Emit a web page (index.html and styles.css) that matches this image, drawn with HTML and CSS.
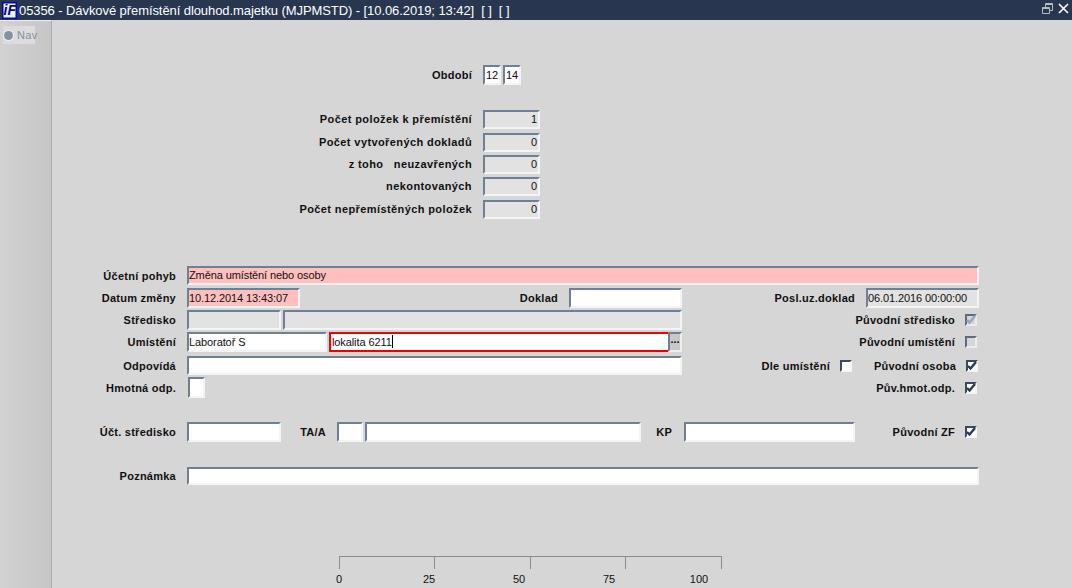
FILE: index.html
```html
<!DOCTYPE html>
<html lang="cs">
<head>
<meta charset="utf-8">
<title>Dávkové přemístění</title>
<link rel="stylesheet" href="styles.css">
</head>
<body>
<div class="window">
  <header class="titlebar">
    <svg class="logo" width="15" height="17" viewBox="0 0 15 17"><rect x="0.750" y="0.750" width="13.500" height="15.500" fill="#eef2fa" stroke="#0000e0" stroke-width="1.500"/><text x="1.500" y="13" class="logo-text">iF</text></svg>
    <span class="title">05356 - Dávkové přemístění dlouhod.majetku (MJPMSTD) - [10.06.2019; 13:42]&nbsp;&nbsp;[ ]&nbsp;&nbsp;[ ]</span>
    <svg class="winbtn" width="27" height="14" viewBox="0 0 27 14"><path d="M3.500 5.500V0.500H10.500V7.500H7.500M3.500 1.500H10.500" fill="none" stroke="#b8bcc4"/><path d="M0.500 4.500H7.500V10.500H0.500ZM0.500 5.500H7.500" fill="none" stroke="#b8bcc4"/><path d="M17 1 26 10M26 1 17 10" stroke="#fff" stroke-width="1.600"/></svg>
  </header>
  <div class="content">
    <aside class="side">
      <div class="nav"><span class="radio"></span><span>Nav</span></div>
    </aside>
    <main class="canvas">
      <section class="stats">
        <div class="row r-period"><label class="lbl l-stat">Období</label><span class="f w18 gap11">12</span><span class="f w18 gap2">14</span></div>
        <div class="row r-s1"><label class="lbl l-stat">Počet položek k přemístění</label><span class="f ro num w57 gap11">1</span></div>
        <div class="row r-s4"><label class="lbl l-stat">Počet vytvořených dokladů</label><span class="f ro num w57 gap11">0</span></div>
        <div class="row r-s3"><label class="lbl l-stat">z toho&nbsp;&nbsp;&nbsp;neuzavřených</label><span class="f ro num w57 gap11">0</span></div>
        <div class="row r-s3"><label class="lbl l-stat">nekontovaných</label><span class="f ro num w57 gap11">0</span></div>
        <div class="row r-s4"><label class="lbl l-stat">Počet nepřemístěných položek</label><span class="f ro num w57 gap11">0</span></div>
      </section>
      <section class="detail">
        <div class="row r19"><label class="lbl l-main">Účetní pohyb</label><span class="f pink w792 gap11">Změna umístění nebo osoby</span></div>
        <div class="row r-first"><label class="lbl l-main">Datum změny</label><span class="f pink w113 gap11">10.12.2014 13:43:07</span><label class="lbl l-doklad">Doklad</label><span class="f w113 gap11"></span><label class="lbl l-posl">Posl.uz.doklad</label><span class="f ro w113 gap11">06.01.2016 00:00:00</span></div>
        <div class="row r-d"><label class="lbl l-main">Středisko</label><span class="f ro w94 gap11"></span><span class="f ro w399 gap2"></span><label class="lbl l-chk1">Původní středisko</label><span class="chk dis"><svg width="12" height="12" viewBox="0 0 12 12"><path d="M2 6 4.500 8.500 10 2" class="tick-dis"/></svg></span></div>
        <div class="row r-d"><label class="lbl l-main">Umístění</label><span class="f w140 gap11">Laboratoř S</span><span class="f red w340 gap2">lokalita 6211<i class="caret"></i></span><button class="more">...</button><label class="lbl l-chk1">Původní umístění</label><span class="chk dis"></span></div>
        <div class="row r19 r-d1"><label class="lbl l-main">Odpovídá</label><span class="f w495 gap11"></span><label class="lbl l-dle">Dle umístění</label><span class="chk"></span><label class="lbl l-chk2">Původní osoba</label><span class="chk"><svg width="12" height="12" viewBox="0 0 12 12"><path d="M2 6 4.500 8.500 10 2" class="tick"/></svg></span></div>
        <div class="row r21 r-d"><label class="lbl l-main">Hmotná odp.</label><span class="f w17 gap12"></span><label class="lbl l-hmot">Pův.hmot.odp.</label><span class="chk"><svg width="12" height="12" viewBox="0 0 12 12"><path d="M2 6 4.500 8.500 10 2" class="tick"/></svg></span></div>
        <div class="row r-acc"><label class="lbl l-main">Účt. středisko</label><span class="f w94 gap11"></span><label class="lbl l-ta">TA/A</label><span class="f w26 gap11"></span><span class="f w276 gap2"></span><label class="lbl l-kp">KP</label><span class="f w171 gap12"></span><label class="lbl l-zf">Původní ZF</label><span class="chk"><svg width="12" height="12" viewBox="0 0 12 12"><path d="M2 6 4.500 8.500 10 2" class="tick"/></svg></span></div>
        <div class="row r18 r-note"><label class="lbl l-main">Poznámka</label><span class="f w792 gap11">&nbsp;</span></div>
      </section>
      <section class="scale">
        <div class="ticks"><i></i><i></i><i></i><i></i></div>
        <div class="scale-labels"><span>0</span><span>25</span><span>50</span><span>75</span><span>100</span></div>
      </section>
    </main>
  </div>
</div>
</body>
</html>
```
FILE: styles.css
```css
* { box-sizing: border-box; }
html, body { margin: 0; height: 100%; overflow: hidden; }
body { font-family: "Liberation Sans", Arial, sans-serif; font-size: 11px; color: #101010; background: #d6d6d6; }
.window { width: 1072px; height: 588px; display: flex; flex-direction: column; }
.titlebar { height: 20px; flex: none; background: #28374f; display: flex; align-items: center; padding: 0 3px 0 2px; color: #fff; }
.logo { flex: none; }
.logo-text { font: italic 700 14px "Liberation Sans", sans-serif; fill: #0a0a70; }
.title { flex: 1; margin-left: 2px; font-size: 13px; letter-spacing: -0.08px; white-space: nowrap; }
.winbtn { flex: none; }
.content { flex: 1; display: flex; min-height: 0; }
.side { width: 52px; flex: none; background: linear-gradient(90deg, #d2d2d2, #c6c6c6); border-right: 1px solid #a7adb6; border-top: 1px solid #f0f0f0; padding: 5px 0 0 3px; }
.nav { width: 32px; height: 18px; background: #dcdcdc; display: flex; align-items: center; gap: 4px; color: #8391a4; font-size: 11px; letter-spacing: 0.3px; }
.radio { flex: none; width: 9px; height: 9px; margin-left: 1px; border-radius: 50%; background: #8391a4; box-shadow: 0 0 0 1px #f0f0f0; }
.canvas { flex: 1; min-width: 0; display: flex; flex-direction: column; }
.row { display: flex; align-items: center; height: 20px; flex: none; }
.r18 { height: 18px; }
.r19 { height: 19px; }
.r21 { height: 21px; }
.lbl { font-weight: 700; text-align: right; white-space: nowrap; letter-spacing: 0.25px; flex: none; }
.f { flex: none; height: 100%; padding: 0; line-height: 16px; background: #fff; border: 2px solid; border-color: #6f7f95 #f4f4f4 #f4f4f4 #6f7f95; white-space: nowrap; overflow: hidden; font-size: 11px; letter-spacing: -0.1px; }
.r19 .f { line-height: 15px; }
.r18 .f { line-height: 14px; }
.ro { background: #e2e2e2; }
.pink { background: #ffbfbf; }
.red { border: 2px solid #f00000; border-right: 0; padding-left: 1px; }
.num { text-align: right; padding-right: 1px; }
.caret { display: inline-block; width: 1px; height: 13px; background: #000; vertical-align: -2px; }
.stats { padding-top: 45px; }
.stats .row:not(.r-period) { height: 19px; }
.stats .row:not(.r-period) .f { line-height: 14px; }
.stats .row:not(.r-period) .lbl { padding-bottom: 2px; letter-spacing: 0.4px; }
.r-period .f { text-align: center; color: #200020; }
.r-s1 { margin-top: 25px; }
.r-s3 { margin-top: 3px; }
.r-s4 { margin-top: 4px; }
.l-stat { width: 420px; }
.gap11 { margin-left: 11px; }
.gap12 { margin-left: 12px; }
.gap2 { margin-left: 2px; }
.w17 { width: 17px; }
.w18 { width: 18px; }
.w26 { width: 26px; }
.w57 { width: 57px; }
.w94 { width: 94px; }
.w113 { width: 113px; }
.w140 { width: 140px; }
.w171 { width: 171px; }
.w276 { width: 276px; }
.w340 { width: 340px; }
.w399 { width: 399px; }
.w495 { width: 495px; }
.w792 { width: 792px; }
.detail { margin-top: 47px; }
.r-first { margin-top: 3px; }
.r-d { margin-top: 2px; }
.r-d1 { margin-top: 4px; }
.l-main { width: 124px; }
.l-doklad { width: 258px; }
.l-posl { width: 173px; }
.l-chk1 { width: 273px; }
.l-dle { width: 148px; }
.l-chk2 { width: 104px; }
.l-hmot { width: 750px; }
.l-ta { width: 45px; }
.l-kp { width: 31px; }
.l-zf { width: 100px; }
.chk { flex: none; width: 12px; height: 12px; margin-left: 10px; background: #fff; border: 2px solid; border-color: #3c4a60 #f6f6f6 #f6f6f6 #3c4a60; display: block; }
.chk svg { display: block; margin: -2px; }
.chk.dis { background: #d6d6d6; border-color: #5f6b7b #ececec #ececec #5f6b7b; }
.tick { fill: none; stroke: #2a3a52; stroke-width: 2.400; }
.tick-dis { fill: none; stroke: #9aa8bc; stroke-width: 2.600; }
.more { flex: none; width: 14px; height: 100%; margin: 0 0 0 -1px; padding: 0 0 7px; background: #c8c8c8; border: 2px solid; border-color: #6f7f95 #eee #eee #6f7f95; color: #300000; font: 700 11px "Liberation Sans", sans-serif; line-height: 10px; }
.r-acc { margin-top: 24px; }
.r-note { margin-top: 25px; }
.scale { margin: 71px 0 0 287px; width: 383px; }
.ticks { height: 13px; border: 1px solid #8c8c8c; border-bottom: 0; display: grid; grid-template-columns: repeat(4, 1fr); }
.ticks i { border-right: 1px solid #8c8c8c; }
.ticks i:last-child { border-right: 0; }
.scale-labels { display: grid; grid-template-columns: repeat(5, 90px); margin: 4px 0 0 -45px; text-align: center; line-height: 13px; }
```
